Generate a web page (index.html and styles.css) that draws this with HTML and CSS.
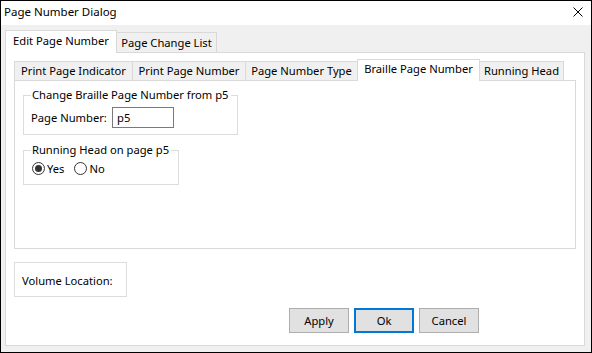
FILE: index.html
```html
<!DOCTYPE html>
<html lang="en">
<head>
    <meta charset="UTF-8">
    <title>Page Number Dialog</title>
    <link rel="stylesheet" href="styles.css">
</head>
<body>
    <div class="window">
        <!-- Title bar -->
        <div class="titlebar">
            <span class="title">Page Number Dialog</span>
            <svg class="close" width="10" height="10" viewBox="0 0 10 10">
                <path d="M0.5 0.5 L9.5 9.5 M9.5 0.5 L0.5 9.5" stroke="#000" stroke-width="1" fill="none"/>
            </svg>
        </div>

        <div class="client">
            <!-- Outer tabs -->
            <div class="tab-strip outer-strip">
                <div class="tab selected">Edit Page Number</div>
                <div class="tab">Page Change List</div>
            </div>

            <div class="pane outer-pane">
                <!-- Inner tabs -->
                <div class="tab-strip inner-strip">
                    <div class="tab t-indicator">Print Page Indicator</div>
                    <div class="tab t-number">Print Page Number</div>
                    <div class="tab t-type">Page Number Type</div>
                    <div class="tab selected t-braille">Braille Page Number</div>
                    <div class="tab t-head">Running Head</div>
                </div>

                <div class="pane inner-pane">
                    <fieldset class="group group-braille">
                        <legend>Change Braille Page Number from p5</legend>
                        <div class="field-row">
                            <label>Page Number:</label>
                            <div class="textbox">p5</div>
                        </div>
                    </fieldset>

                    <fieldset class="group group-head">
                        <legend>Running Head on page p5</legend>
                        <div class="radio-row">
                            <span class="radio checked"></span><span class="radio-label">Yes</span>
                            <span class="radio"></span><span class="radio-label">No</span>
                        </div>
                    </fieldset>
                </div>

                <!-- Volume Location -->
                <div class="volume">Volume Location:</div>

                <!-- Buttons -->
                <div class="buttons">
                    <div class="btn">Apply</div>
                    <div class="btn default">Ok</div>
                    <div class="btn">Cancel</div>
                </div>
            </div>
        </div>
    </div>
</body>
</html>
```

FILE: styles.css
```css
* {
    margin: 0;
    padding: 0;
    box-sizing: border-box;
}

body {
    font-family: 'Noto Sans', 'Open Sans', sans-serif;
    font-size: 11.2px;
    color: #000;
    background: #fff;
    white-space: nowrap;
}

/* Window frame */
.window {
    width: 592px;
    height: 353px;
    border: 1px solid #000;
    display: flex;
    flex-direction: column;
}

.titlebar {
    height: 24px;
    background: #fff;
    display: flex;
    align-items: center;
    justify-content: space-between;
    padding: 0 8px 0 3px;
}

.title {
    font-size: 11.5px;
    line-height: 16px;
    margin-top: -2px;
}

.close {
    display: block;
    margin-top: -2px;
}

.client {
    flex: 1;
    background: #f0f0f0;
    padding: 5px 6px 6px 4px;
    display: flex;
    flex-direction: column;
}

/* Tabs */
.tab-strip {
    display: flex;
    align-items: flex-end;
}

.tab {
    border: 1px solid #d9d9d9;
    border-bottom: none;
    background: #f0f0f0;
    text-align: center;
    margin-left: -1px;
}

.tab:first-child {
    margin-left: 0;
}

.tab.selected {
    background: #fff;
    margin-bottom: -1px;
    position: relative;
    z-index: 1;
}

.outer-strip {
    height: 22px;
}

.outer-strip .tab {
    height: 20px;
    line-height: 20px;
    width: 101px;
}

.outer-strip .tab.selected {
    height: 23px;
    line-height: 20px;
    width: 112px;
}

.inner-strip {
    height: 21px;
}

.inner-strip .tab {
    height: 19px;
    line-height: 18px;
}

.inner-strip .tab.selected {
    height: 22px;
    line-height: 18px;
}

.t-indicator { width: 119px; }
.t-number { width: 114px; }
.t-type { width: 113px; }
.t-braille { width: 123px; }
.t-head { width: 85px; }

/* Panes */
.pane {
    background: #fff;
    border: 1px solid #d9d9d9;
}

.outer-pane {
    flex: 1;
    padding: 6px 8px 0 8px;
    display: flex;
    flex-direction: column;
}

.inner-pane {
    height: 169px;
    padding: 6px 8px 0 8px;
}

/* Group boxes */
.group {
    border: 1px solid #dcdcdc;
    padding: 0 0 0 7px;
}

.group legend {
    padding: 0 2px 0 1px;
    line-height: 16px;
}

.group-braille {
    width: 215px;
    height: 48px;
}

.group-head {
    width: 156px;
    height: 43px;
    margin-top: 7px;
}

.field-row {
    display: flex;
    align-items: center;
    margin-top: 4px;
}

.field-row label {
    width: 81px;
}

.textbox {
    width: 62px;
    height: 21px;
    border: 1px solid #7a7a7a;
    padding-left: 4px;
    line-height: 20px;
}

.radio-row {
    display: flex;
    align-items: center;
    margin-top: 3px;
    margin-left: 1px;
}

.radio {
    width: 13px;
    height: 13px;
    border: 1px solid #333;
    border-radius: 50%;
    display: flex;
    align-items: center;
    justify-content: center;
}

.radio.checked::after {
    content: '';
    width: 7px;
    height: 7px;
    border-radius: 50%;
    background: #333;
}

.radio-label {
    margin-left: 2px;
    margin-right: 10px;
}

/* Volume location */
.volume {
    width: 113px;
    height: 35px;
    border: 1px solid #dcdcdc;
    margin-top: 13px;
    padding-left: 7px;
    padding-top: 2px;
    display: flex;
    align-items: center;
}

/* Buttons */
.buttons {
    display: flex;
    gap: 5px;
    margin-top: 11px;
    margin-left: 275px;
}

.btn {
    width: 60px;
    height: 25px;
    background: #e1e1e1;
    border: 1px solid #adadad;
    display: flex;
    align-items: center;
    justify-content: center;
}

.btn.default {
    border: 2px solid #0078d7;
}
```
